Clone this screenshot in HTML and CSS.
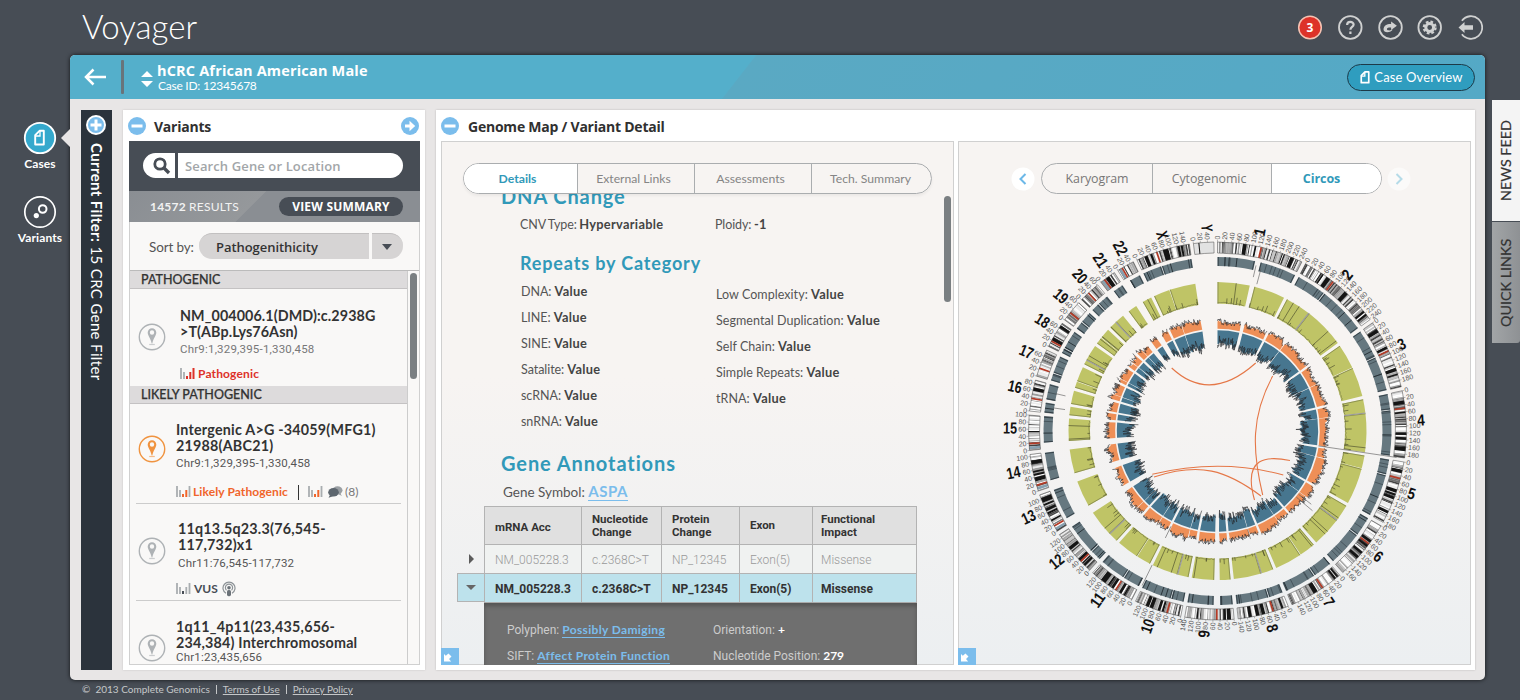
FILE: index.html
```html
<!DOCTYPE html>
<html lang="en">
<head>
<meta charset="utf-8">
<title>Voyager</title>
<link rel="stylesheet" href="styles.css">
</head>
<body>
<svg width="0" height="0" class="defs">
  <defs>
    <symbol id="pin" viewBox="0 0 28 28">
      <circle cx="14" cy="14" r="12.7" fill="none" stroke="currentColor" stroke-width="1.4"/>
      <path d="M14 5.2a4.3 4.3 0 0 0-4.3 4.3c0 3 3 6 4 11h.6c1-5 4-8 4-11A4.3 4.3 0 0 0 14 5.2zm0 2.1a2.2 2.2 0 1 1 0 4.4 2.2 2.2 0 0 1 0-4.4z" fill="currentColor" fill-rule="evenodd"/>
      <path d="M11.2 21.5h5.6" stroke="currentColor" stroke-width="1.2" opacity=".6"/>
    </symbol>
    <symbol id="minus" viewBox="0 0 18 18"><circle cx="9" cy="9" r="9" fill="#7bbdec"/><path d="M3.500 9h11" stroke="#fff" stroke-width="3"/></symbol>
    <symbol id="collapse" viewBox="0 0 18 17"><path d="M0 0h18v17H0z" fill="#7bbdec"/><path d="M3 6l1.800 1.800L7.500 5.500l3 3L8 11l2.200 2.500H3z" fill="#fff"/></symbol>
    <symbol id="page" viewBox="0 0 12 16"><path d="M6 2h4v11.500H2V6z" fill="none" stroke="currentColor" stroke-width="1.8" stroke-linejoin="round"/><path d="M5.800 2v4.500H2" fill="none" stroke="currentColor" stroke-width="1.400"/></symbol>
  </defs>
</svg>

<header class="top">
  <h1 class="brand">Voyager</h1>
  <div class="tools">
    <svg width="26" height="26" viewBox="0 0 26 26"><circle cx="13" cy="13.500" r="11.300" fill="#dd3229" stroke="#f6c3b3" stroke-width="1.500"/><text x="13" y="17.800" class="alert" text-anchor="middle">3</text></svg>
    <svg width="26" height="26" viewBox="0 0 26 26"><g transform="translate(.3 .5)"><circle cx="13" cy="13" r="11.300" class="ring"/><path d="M9.800 10.600c0-4.200 6.500-4 6.500-.5 0 2.400-3.200 2.400-3.200 5.100M13.100 17v2.400" class="ring thick"/></g></svg>
    <svg width="26" height="26" viewBox="0 0 26 26"><g transform="translate(.5 .5)"><circle cx="13" cy="13" r="11.300" class="ring"/><path d="M6 14.800c.2-3.800 3.600-5.600 7.600-5.400V7l5.800 4.300-5.800 4.300v-2.500c-2.700-.1-4.600.3-4.100 1.900.5 1.200 3.600 1.200 5.800.1-1.500 3-9.400 4-9.300-.3z" class="solid"/></g></svg>
    <svg width="26" height="26" viewBox="0 0 26 26"><g transform="translate(-.3 .5)"><circle cx="13" cy="13" r="11.300" class="ring"/><circle cx="13" cy="13" r="3.900" fill="none" stroke="#d0d1d1" stroke-width="3"/><circle cx="13" cy="13" r="5.900" fill="none" stroke="#d0d1d1" stroke-width="2.200" stroke-dasharray="2.700 1.934"/></g></svg>
    <svg width="26" height="26" viewBox="0 0 26 26"><g transform="translate(.5 .5)"><path d="M4.400 6.200a11.300 11.300 0 1 1 0 13.600" class="ring"/><path d="M1 13l6-5.500v3.200h8.500v4.600H7v3.200z" class="solid"/></g></svg>
  </div>
</header>

<main class="stage">
  <nav class="rail">
    <a class="rail-item">
      <svg width="34" height="34" viewBox="0 0 34 34"><circle cx="17" cy="17" r="15.200" fill="#35a9cd" stroke="#fff" stroke-width="1.800"/><path d="M16.500 9.800h4.300v13.700h-8.600v-9.300z" fill="none" stroke="#fff" stroke-width="1.900" stroke-linejoin="round"/><path d="M17 10v5h-4.500" fill="none" stroke="#fff" stroke-width="1.300"/></svg>
      <span>Cases</span>
    </a>
    <a class="rail-item">
      <svg width="34" height="34" viewBox="0 0 34 34"><circle cx="17" cy="17" r="15.200" fill="none" stroke="#fff" stroke-width="1.700"/><circle cx="19.700" cy="14" r="3.800" fill="none" stroke="#fff" stroke-width="2"/><circle cx="13.300" cy="20.600" r="2.600" fill="#fff"/></svg>
      <span>Variants</span>
    </a>
    <i class="pointer"></i>
  </nav>

  <section class="app">
    <div class="casebar">
      <svg class="back" width="24" height="20" viewBox="0 0 24 20"><path d="M9.500 2.500L2 10l7.500 7.500M2 10h20" fill="none" stroke="#fff" stroke-width="2.500"/></svg>
      <i class="rule"></i>
      <svg class="updown" width="12" height="18" viewBox="0 0 12 18"><path d="M0 7l6-6 6 6zM0 11h12l-6 6z" fill="#fff"/></svg>
      <div class="case"><strong>hCRC African American Male</strong><span>Case ID: 12345678</span></div>
      <button class="overview"><svg width="12" height="15" viewBox="0 0 12 16"><use href="#page"/></svg><span>Case Overview</span></button>
    </div>

    <div class="columns">
      <aside class="filter">
        <svg width="20" height="20" viewBox="0 0 20 20"><circle cx="10" cy="10" r="9" fill="#7bbdec" stroke="#fff" stroke-width="2"/><path d="M10 4.500v11M4.500 10h11" stroke="#fff" stroke-width="3"/></svg>
        <p><b>Current Filter:</b> <span>15 CRC Gene Filter</span></p>
      </aside>

      <section class="variants">
        <div class="panel-head">
          <svg width="18" height="18"><use href="#minus"/></svg>
          <h2 class="t-variants">Variants</h2>
          <svg class="go" width="18" height="18" viewBox="0 0 18 18"><circle cx="9" cy="9" r="9" fill="#7bbdec"/><path d="M4 9h5" stroke="#fff" stroke-width="3"/><path d="M8.500 3.800L14.200 9l-5.700 5.200z" fill="#fff"/></svg>
        </div>
        <div class="vbox">
          <div class="search">
            <div class="lens"><svg width="20" height="20" viewBox="0 0 20 20"><circle cx="8" cy="8" r="5.200" fill="none" stroke="#474d55" stroke-width="2.800"/><path d="M11.500 11.500l5.500 5.500" stroke="#474d55" stroke-width="3.400"/></svg></div>
            <div class="field">Search Gene or Location</div>
          </div>
          <div class="results"><span class="count"><b>14572</b> RESULTS</span><span class="summary">VIEW SUMMARY</span></div>
          <div class="sort"><span class="sort-label">Sort by:</span><span class="select">Pathogenithicity</span><span class="drop"><i></i></span></div>
          <div class="scroller">
            <div class="list">
              <h3>PATHOGENIC</h3>
              <article class="v v1">
                <svg class="pin" width="28" height="28"><use href="#pin"/></svg>
                <div>
                  <h4>NM_004006.1(DMD):c.2938G<br>&gt;T(ABp.Lys76Asn)</h4>
                  <p class="loc">Chr9:1,329,395-1,330,458</p>
                  <p class="tag red"><svg width="15" height="12" viewBox="0 0 15 12"><path d="M1 0v11M4 4v7" class="g"/><path d="M7 8v3M10.300 4v7M13.500 0v11" class="c"/></svg><span class="tx-path">Pathogenic</span></p>
                </div>
              </article>
              <h3>LIKELY PATHOGENIC</h3>
              <article class="v v2">
                <svg class="pin orange" width="28" height="28"><use href="#pin"/></svg>
                <div>
                  <h4>Intergenic A&gt;G -34059(MFG1)<br>21988(ABC21)</h4>
                  <p class="loc">Chr9:1,329,395-1,330,458</p>
                  <p class="tag orange"><svg width="15" height="12" viewBox="0 0 15 12"><path d="M1 0v11M4 4v7M13.500 0v11" class="g"/><path d="M7 8v3M10.300 4v7" class="c"/></svg><span class="tx-likely">Likely Pathogenic</span><i class="bar"></i><svg width="15" height="12" viewBox="0 0 15 12"><path d="M1 0v11M4 4v7M13.500 0v11" class="g"/><path d="M7 8v3M10.300 4v7" class="c"/></svg><svg class="chat" width="15" height="12" viewBox="0 0 15 12"><ellipse cx="9.500" cy="4.300" rx="5" ry="4" fill="#9a9fa3"/><path d="M12 7l2 3-4-2z" fill="#9a9fa3"/><ellipse cx="5.500" cy="6.300" rx="5.300" ry="4.300" fill="#5d666e"/><path d="M2 9l-1.500 2.700L5 10.300z" fill="#5d666e"/></svg><span class="eight">(8)</span></p>
                </div>
              </article>
              <article class="v v3">
                <svg class="pin" width="28" height="28"><use href="#pin"/></svg>
                <div>
                  <h4>11q13.5q23.3(76,545-<br>117,732)x1</h4>
                  <p class="loc">Chr11:76,545-117,732</p>
                  <p class="tag dark"><svg width="15" height="12" viewBox="0 0 15 12"><path d="M1 0v11M4 4v7M10.300 4v7M13.500 0v11" class="g"/><path d="M7 8v3" class="c"/></svg><span class="vus">VUS</span><svg class="cast" width="14" height="16" viewBox="0 0 14 16"><path d="M4 12.300a6 6 0 1 1 6 0M4.500 9.300a3.600 3.600 0 1 1 5 0" fill="none" stroke="#8d9397" stroke-width="1.200"/><circle cx="7" cy="6.700" r="1.800" fill="#6b7278"/><rect x="5" y="9" width="4" height="6.200" rx="1.600" fill="#6b7278"/></svg></p>
                </div>
              </article>
              <article class="v v4">
                <svg class="pin" width="28" height="28"><use href="#pin"/></svg>
                <div>
                  <h4>1q11_4p11(23,435,656-<br>234,384) Interchromosomal</h4>
                  <p class="loc">Chr1:23,435,656</p>
                </div>
              </article>
            </div>
            <div class="track"><i></i></div>
          </div>
        </div>
      </section>

      <section class="genome">
        <div class="panel-head">
          <svg width="18" height="18"><use href="#minus"/></svg>
          <h2 class="t-genome">Genome Map / Variant Detail</h2>
        </div>
        <div class="panes">
          <div class="pane">
            <div class="tabs detail-tabs"><span class="on">Details</span><span>External Links</span><span>Assessments</span><span>Tech. Summary</span></div>
            <div class="detail">
              <div class="detail-body">
                <h3 class="big dna">DNA Change</h3>
                <div class="pair cnv"><p>CNV Type: <b>Hypervariable</b></p><p>Ploidy: <b>-1</b></p></div>
                <h3 class="mid">Repeats by Category</h3>
                <div class="pair repeats">
                  <div><p>DNA: <b>Value</b></p><p>LINE: <b>Value</b></p><p>SINE: <b>Value</b></p><p>Satalite: <b>Value</b></p><p>scRNA: <b>Value</b></p><p>snRNA: <b>Value</b></p></div>
                  <div class="second"><p>Low Complexity: <b>Value</b></p><p>Segmental Duplication: <b>Value</b></p><p>Self Chain: <b>Value</b></p><p>Simple Repeats: <b>Value</b></p><p>tRNA: <b>Value</b></p></div>
                </div>
                <h3 class="big gene">Gene Annotations</h3>
                <p class="symbol">Gene Symbol: <a>ASPA</a></p>
                <div class="table">
                  <div class="tr th"><span></span><span>mRNA Acc</span><span>Nucleotide<br>Change</span><span>Protein<br>Change</span><span>Exon</span><span>Functional<br>Impact</span></div>
                  <div class="tr dim"><span><svg width="7" height="10"><path d="M1 0l5 5-5 5z" fill="#5b5b5b"/></svg></span><span>NM_005228.3</span><span>c.2368C&gt;T</span><span>NP_12345</span><span>Exon(5)</span><span>Missense</span></div>
                  <div class="tr sel"><span><svg width="10" height="6"><path d="M0 0h10L5 5z" fill="#666"/></svg></span><span>NM_005228.3</span><span>c.2368C&gt;T</span><span>NP_12345</span><span>Exon(5)</span><span>Missense</span></div>
                  <div class="extra">
                    <p>Polyphen: <a>Possibly Damiging</a></p><p>Orientation: <b>+</b></p>
                    <p>SIFT: <a>Affect Protein Function</a></p><p>Nucleotide Position: <b>279</b></p>
                  </div>
                </div>
              </div>
              <div class="track2"><i></i></div>
            </div>
            <svg class="corner" width="18" height="17"><use href="#collapse"/></svg>
          </div>
          <div class="pane">
            <div class="map-nav">
              <svg width="24" height="24" viewBox="0 0 24 24"><circle cx="12" cy="12" r="11.500" fill="#fff"/><path d="M14.500 7l-5 5 5 5" fill="none" stroke="#6cb8e8" stroke-width="2"/></svg>
              <div class="tabs map-tabs"><span>Karyogram</span><span>Cytogenomic</span><span class="on">Circos</span></div>
              <svg width="24" height="24" viewBox="0 0 24 24"><circle cx="12" cy="12" r="11.500" fill="#fff" opacity=".5"/><path d="M9.500 7l5 5-5 5" fill="none" stroke="#b5dbe8" stroke-width="2"/></svg>
            </div>
            <svg id="circos" class="circos" width="511" height="468" viewBox="959 195 511 468"></svg>
            <svg class="corner" width="18" height="17"><use href="#collapse"/></svg>
          </div>
        </div>
      </section>
    </div>
  </section>

  <aside class="side-tabs"><div class="news">NEWS FEED</div><div class="quick">QUICK LINKS</div></aside>
</main>

<footer class="foot"><span>©&nbsp; 2013 Complete Genomics</span><i></i><a>Terms of Use</a><i></i><a>Privacy Policy</a></footer>
<script src="circos.js"></script>
</body>
</html>
```
FILE: styles.css
```css
* { box-sizing: border-box; }
html, body { margin: 0; height: 700px; overflow: hidden; }
body { background: #474d55; font-family: Lato, sans-serif; color: #333; width: 1520px; }
h1, h2, h3, h4, p { margin: 0; font-weight: inherit; }
svg { display: block; flex: none; }
svg text { font-family: "Liberation Sans", sans-serif; }
.defs { position: absolute; }
.top { height: 55px; display: flex; justify-content: space-between; padding: 0 37px 0 82px; }
.brand { font-weight: 300; font-size: 33px; line-height: 40px; color: #fff; padding-top: 6px; }
.tools { display: flex; gap: 14px; padding-top: 14px; }
.tools .alert { font: bold 12px "Open Sans", sans-serif; fill: #fff; }
.ring { fill: none; stroke: #d0d1d1; stroke-width: 1.8; }
.ring.thick { stroke-width: 2.2; }
.solid { fill: #d0d1d1; }

.stage { display: flex; height: 625px; }
.rail { width: 70px; position: relative; padding-top: 66px; flex: none; }
.rail-item { display: flex; flex-direction: column; align-items: center; width: 80px; height: 74px; color: #fff; font-size: 12px; font-weight: 700; line-height: 16px; gap: 1px; letter-spacing: .1px; }
.pointer { position: absolute; right: 0; top: 74px; border: 9px solid transparent; border-left: 0; border-right-color: #e8e6e6; }

.app { width: 1415px; background: #e8e6e6; box-shadow: 0 0 4px rgba(0,0,0,.75); flex: none; overflow: hidden; border-radius: 5px; }
.casebar { height: 44px; display: flex; align-items: center; color: #fff; background: linear-gradient(128deg, #54afcb 0%, #54afcb 47.300%, #5aa9c3 47.400%, #54a9c6 100%); padding: 0 10px 0 14px; }
.rule { width: 3px; height: 34px; background: #68747b; margin-left: 13px; border-radius: 1px; }
.updown { margin: 3px 0 0 17px; }
.case { margin-left: 4px; display: flex; flex-direction: column; padding-bottom: 1px; }
.case strong { font: 700 14.500px/17px "Open Sans", sans-serif; letter-spacing: .17px; }
.case span { font-size: 12px; line-height: 13px; letter-spacing: -.25px; padding-left: 1px; }
.overview { margin-left: auto; width: 128px; height: 27px; border: 1px solid #1d3a48; border-radius: 14px; background: #2f9dbf; color: #fff; font: 400 13px Lato, sans-serif; display: flex; align-items: center; justify-content: center; gap: 3px; padding: 0; letter-spacing: .15px; }

.columns { display: flex; padding: 11px 10px 10px 11px; gap: 11px; height: 581px; }
.filter { width: 31px; background: #2b333c; display: flex; flex-direction: column; align-items: center; padding: 5px 2px 0 0; color: #fff; }
.filter p { writing-mode: vertical-rl; font-size: 15px; line-height: 20px; margin: 8px 0 0 3px; white-space: nowrap; letter-spacing: .36px; }
.variants { width: 302px; background: #fff; padding: 0 6px 6px 6px; box-shadow: 0 0 2px rgba(0,0,0,.15); }
.genome { width: 1039px; background: #fff; padding: 0 4px 5px 5px; box-shadow: 0 0 2px rgba(0,0,0,.2); }
.panel-head { height: 31px; display: flex; align-items: center; }
.panel-head h2 { font: 700 14px/20px "Open Sans", sans-serif; color: #303030; margin: 3px 0 0 8px; letter-spacing: -.23px; }
.panel-head .t-genome { margin-left: 9px; }
.go { margin-left: auto; }
.variants .panel-head { margin-left: -1px; }

.vbox { width: 291px; height: 524px; display: flex; flex-direction: column; border: 1px solid #d0d0d0; border-top: 0; background: #f9f8f7; }
.search { margin: 0 -1px; height: 50px; background: #474d55; display: flex; gap: 3px; padding: 12px 17px 13px 14px; flex: none; }
.lens { width: 32px; background: #fff; border-radius: 13px 0 0 13px; padding: 3px 0 0 9px; }
.field { flex: 1; background: #fff; border-radius: 0 13px 13px 0; font: 600 13px/27px "Open Sans", sans-serif; color: #a2a6a8; padding-left: 7px; letter-spacing: .12px; white-space: nowrap; }
.results { margin: 0 -1px; height: 31px; background: linear-gradient(135deg, #8a8e93 0%, #95989b 42.500%, #8a8e93 42.800%); display: flex; align-items: center; justify-content: space-between; padding: 0 17px 0 21px; color: #f2f2f2; flex: none; }
.count { font-size: 12px; letter-spacing: .2px; }
.summary { width: 124px; height: 19px; border-radius: 10px; background: #474d55; color: #fff; text-align: center; font: 700 12px/19px "Open Sans", sans-serif; letter-spacing: .2px; }
.sort { height: 48px; display: flex; align-items: flex-start; padding: 11px 15px 0 19px; flex: none; }
.sort-label { width: 50px; font-size: 13.500px; line-height: 28px; color: #555; letter-spacing: -.15px; }
.select { width: 170px; height: 26px; background: #d6d4d4; border-radius: 13px 0 0 13px; border-top: 1px solid #c2c0c0; font: 600 13px/26px "Open Sans", sans-serif; padding-left: 17px; letter-spacing: -.05px; }
.drop { width: 31px; height: 26px; margin-left: 3px; background: #d6d4d4; border-radius: 0 13px 13px 0; border-top: 1px solid #c2c0c0; padding: 10px 0 0 10px; }
.drop i { display: block; width: 0; border: 5px solid transparent; border-top: 6px solid #474d55; border-bottom: 0; }
.scroller { flex: 1; display: flex; border-top: 1px solid #bbb; overflow: hidden; }
.list { width: 278px; border-right: 1px solid #ccc; overflow: hidden; }
.list h3 { height: 18px; background: #dddbdc; border-bottom: 1px solid #c4c2c3; font-size: 12.500px; line-height: 18px; padding-left: 11px; color: #333; font-weight: 500; -webkit-text-stroke: .25px #333; }
.track { padding: 2px 0 0 2px; }
.track i, .track2 i { display: block; width: 7px; height: 106px; background: #7a7f82; border-radius: 4px; }
.v { position: relative; display: flex; margin: 0 6px 0 6px; border-bottom: 1px solid #ccc; }
.pin { color: #aeb2b5; margin: 0 10px 0 2px; }
.pin.orange { color: #f0933f; }
.v h4 { font-weight: 700; font-size: 14.300px; line-height: 16px; color: #333; white-space: nowrap; letter-spacing: .1px; }
.loc { font: 400 11.500px/16px Roboto, sans-serif; color: #555; white-space: nowrap; letter-spacing: .2px; }
.tag { display: flex; align-items: center; height: 16px; font-size: 12px; font-weight: 700; line-height: 16px; }
.tag .g { stroke: #a9adb0; stroke-width: 1.8; }
.tag .c { stroke: currentColor; stroke-width: 2; }
.tag span { margin-left: 3px; }
.red { color: #dd3229; }
.tag.orange { color: #f0652b; }
.dark { color: #474d55; }
.v1 { height: 97px; border: 0; }
.v1 .pin { margin-top: 34px; margin-right: 14px; }
.v1 h4 { margin-top: 19px; } .v1 .loc { margin-top: 1px; color: #777; } .v1 .tag { margin-top: 9px; }
.tx-path { letter-spacing: .15px; }
.v2 { height: 100px; }
.v2 .pin { margin-top: 31px; }
.v2 h4 { margin-top: 18px; letter-spacing: .22px; } .v2 .loc { margin-top: 1px; } .v2 .tag { margin-top: 13px; }
.tx-likely { letter-spacing: .1px; }
.tag .tx-likely { margin-left: 2px; }
.bar { width: 1px; height: 15px; background: #333; margin: 0 9px 0 10px; }
.chat { margin-left: 5px; }
.tag .eight { color: #777; font-weight: 400; margin-left: 2px; }
.v3 { height: 97px; }
.v3 .pin { margin-top: 33px; }
.v3 h4 { margin: 17px 0 0 2px; letter-spacing: .22px; } .v3 .loc { margin: 2px 0 0 2px; } .v3 .tag { margin-top: 10px; }
.cast { margin-left: 4px; }
.v4 { height: 70px; }
.v4 .pin { margin-top: 33px; }
.v4 h4 { margin-top: 18px; letter-spacing: .2px; } .v4 .loc { margin-top: -2px; }

.panes { display: flex; gap: 4px; }
.pane { position: relative; width: 513px; height: 524px; border: 1px solid #d0d0d0; background: linear-gradient(#f7f4f2 45%, #eceff1); }
.corner { position: absolute; left: -1px; bottom: -1px; }
.tabs { display: flex; height: 31px; border: 1px solid #aaadaf; border-radius: 16px; overflow: hidden; }
.tabs span { border-right: 1px solid #aaadaf; text-align: center; font-size: 12.200px; line-height: 30px; color: #858585; }
.tabs span:last-child { border: 0; }
.tabs .on { background: #fff; color: #3199b9; font-weight: 700; }
.detail-tabs { width: 469px; margin: 21px 0 0 21px; position: relative; box-shadow: 0 2px 3px rgba(0,0,0,.05); }
.detail-tabs span { width: 117px; padding-right: 5px; }
.detail-tabs span:last-child { padding-right: 0; }
.detail-tabs .on { width: 114px; padding-right: 6px; }
.map-nav { display: flex; align-items: center; gap: 5px; margin: 21px 0 0 52px; height: 31px; }
.map-tabs { width: 341px; margin-left: 1px; }
.map-tabs span { width: 119px; font: 400 12.400px/30px "Open Sans", sans-serif; color: #777; padding-right: 6px; letter-spacing: -.05px; }
.map-tabs span:first-child { width: 111px; padding-right: 0; }
.map-tabs .on { width: 109px; padding-right: 10px; font-weight: 700; font-size: 12.500px; }
.circos { margin-top: 1px; }

.detail { display: flex; height: 471px; overflow: hidden; }
.detail-body { width: 502px; padding-left: 15px; }
.track2 { padding-top: 2px; }
.big, .mid { color: #3199b9; font-weight: 700; line-height: 24px; white-space: nowrap; }
.big { font-size: 20px; padding-left: 44px; letter-spacing: .9px; }
.mid { font-size: 18px; padding-left: 63px; margin-top: 14px; letter-spacing: .85px; }
.dna { margin-top: -10px; }
.gene { margin-top: 17px; }
.pair { display: grid; grid-template-columns: 195px 1fr; padding-left: 64px; font-size: 12.500px; line-height: 26px; color: #555; letter-spacing: -.1px; }
.pair p { height: 26px; }
.pair b { color: #444; font-size: 12.800px; letter-spacing: .3px; }
.cnv { margin-top: 3px; padding-left: 63px; word-spacing: -.6px; }
.repeats { margin-top: 3px; }
.repeats p { letter-spacing: -.05px; }
.second { padding-top: 3px; }
.second p { letter-spacing: .05px; }
.symbol { padding-left: 46px; margin-top: 4px; line-height: 24px; height: 27px; font-size: 13.500px; color: #555; }
.symbol a { font-size: 15px; font-weight: 700; color: #7bbdec; border-bottom: 1px solid #7bbdec; letter-spacing: .5px; }
.table { width: 460px; font-family: Roboto, sans-serif; font-size: 12px; }
.tr { display: grid; grid-template-columns: 27px 97px 80px 78px 73px 105px; height: 29px; }
.tr span { border: 1px solid #b3b3b3; border-width: 1px 0 0 1px; display: flex; align-items: center; padding: 2px 0 0 10px; }
.tr span:last-child { border-right-width: 1px; padding-left: 8px; }
.tr span:first-child { border-color: transparent; padding-top: 0; }
.th { height: 38px; font-weight: 700; font-size: 11.500px; line-height: 13px; color: #333; }
.th span:not(:first-child) { background: #e0e0e0; padding-top: 0; }
.th span:nth-child(2) { padding-top: 3px; }
.dim { color: #999; font-weight: 300; }
.dim span:not(:first-child) { background: #f0f2f1; }
.sel { color: #333; font-weight: 700; background: #bde2ec; }
.tr.sel span { border-color: #b3b3b3; }
.sel span:first-child { padding-left: 8px; border-bottom-width: 1px; }
.extra { margin-left: 27px; height: 66px; background: #6f6f6f; border-top: 1px solid #aaa; box-shadow: inset 0 3px 4px rgba(0,0,0,.25); padding: 14px 0 0 23px; display: grid; grid-template-columns: 206px 1fr; line-height: 26px; grid-auto-rows: 26px; font-size: 12px; color: #ccc; }
.extra a { color: #7bbdec; font: 700 12px Lato, sans-serif; border-bottom: 1px solid #7bbdec; letter-spacing: .35px; }
.extra b { color: #fff; font-family: Lato, sans-serif; }

.side-tabs { margin-left: 7px; padding-top: 45px; width: 28px; }
.side-tabs div { height: 121px; writing-mode: vertical-rl; transform: rotate(180deg); text-align: center; font-size: 14.300px; line-height: 27px; padding-bottom: 2px; padding-left: 1px; color: #333; white-space: nowrap; -webkit-text-stroke: .2px #333; }
.side-tabs .news { background: #f4f4f4; margin-bottom: 1px; padding: 0 0 0 1px; }
.side-tabs .quick { background: linear-gradient(90deg, #8e9194, #a2a5a7); border-radius: 3px 0 0 0; padding-bottom: 0; }
.foot { display: flex; align-items: center; height: 18px; padding-left: 82px; font-size: 10px; color: #c5c7c9; }
.foot i { width: 1px; height: 9px; background: #c5c7c9; margin: 0 6px; }
.foot a { text-decoration: underline; }

.circos .mb { font-size: 6.900px; fill: #555; }
.circos .chr { font-size: 16px; font-weight: 700; fill: #111; }
.circos .link { fill: none; stroke: #e57747; stroke-width: 1.100; }
```
FILE: circos.js
```js
(function () {
  var CX = 1217.5, CY = 431, K = 0.10737, GAP = 1.24;
  // name, length (Mb), centromere (Mb), first mapped position (Mb), dark bands, label centre
  var chromosomes = [
    ['1', 247, 125, 0, [[72, 83], [106, 111], [186, 189], [192, 195], [212, 223]], [1259.5, 232]],
    ['2', 243, 93, 0, [[50, 53], [56, 60], [70, 82], [136, 148], [212, 218], [222, 228]], [1347, 274.5]],
    ['3', 199, 91, 0, [[22, 32], [77, 85], [143, 153], [160, 164]], [1401.5, 344]],
    ['4', 191, 50, 0, [[28, 38], [59, 64], [118, 126], [132, 140], [160, 172]], [1421, 420]],
    ['5', 181, 48, 0, [[22, 32], [80, 90], [93, 99], [102, 110], [145, 153]], [1411.5, 493.5]],
    ['6', 171, 61, 0, [[49, 57], [66, 72], [90, 98], [106, 115]], [1378.5, 556.5]],
    ['7', 159, 60, 0, [[5, 10], [13, 19], [77, 90]], [1329, 602]],
    ['8', 146, 45, 0, [[14, 20], [68, 78], [85, 95], [107, 116]], [1272.5, 628]],
    ['9', 140, 49, 0, [[9, 20], [23, 30], [103, 107]], [1204, 634]],
    ['10', 135, 40, 0, [[50, 56], [60, 68], [82, 92], [94, 104]], [1147.5, 626]],
    ['11', 134, 53, 0, [[22, 27], [34, 42], [60, 68], [74, 80], [88, 104]], [1097.5, 600]],
    ['12', 132, 35, 0, [[17, 24], [26, 30], [38, 46], [78, 88]], [1056.5, 561.5]],
    ['13', 114, 17, 18, [[32, 37], [54, 60], [64, 72], [80, 86], [90, 104]], [1028.5, 517]],
    ['14', 106, 17, 19, [[28, 40], [44, 50], [54, 58], [78, 88]], [1013.5, 472.5]],
    ['15', 100, 19, 19, [[52, 55], [72, 74]], [1010, 428]],
    ['16', 89, 36, 0, [[58, 68]], [1015, 386.5]],
    ['17', 79, 24, 0, [[58, 60]], [1026.5, 351.5]],
    ['18', 76, 17, 0, [[20, 29], [62, 69]], [1042.5, 320.5]],
    ['19', 63, 26, 0, [], [1061, 296]],
    ['20', 62, 27, 0, [[40, 42]], [1080, 276]],
    ['21', 47, 13, 14, [[17, 29]], [1100.5, 260]],
    ['22', 50, 14, 16, [], [1120.5, 248]],
    ['X', 155, 60, 0, [[22, 32], [40, 46], [78, 94], [120, 127], [130, 136]], [1162.5, 235]],
    ['Y', 58, 12, 99, [[14, 17]], [1207, 228]]
  ];
  var seed = 1234567;
  function rnd() {
    seed = (seed * 1103515245 + 12345) % 2147483648;
    return seed / 2147483648;
  }
  function pt(r, deg) {
    var a = deg * Math.PI / 180;
    return (CX + r * Math.sin(a)).toFixed(2) + ' ' + (CY - r * Math.cos(a)).toFixed(2);
  }
  var out = [];
  function sector(r0, r1, a0, a1, attrs) {
    out.push('<path d="M' + pt(r1, a0) + 'A' + r1 + ' ' + r1 + ' 0 0 1 ' + pt(r1, a1) +
      'L' + pt(r0, a1) + 'A' + r0 + ' ' + r0 + ' 0 0 0 ' + pt(r0, a0) + 'Z" ' + attrs + '/>');
  }
  function ray(r0, r1, a, color, w) {
    out.push('<path d="M' + pt(r0, a) + 'L' + pt(r1, a) + '" stroke="' + color + '" stroke-width="' + w + '"/>');
  }
  function radialText(p, a, str, cls, anchor, extra) {
    var left = a > 180;
    out.push('<text class="' + cls + '" text-anchor="' + (anchor || (left ? 'end' : 'start')) +
      '" dy=".35em" ' + (extra || '') + ' transform="translate(' + p + ') rotate(' + (left ? a + 90 : a - 90) + ')">' + str + '</text>');
  }
  // Density profile: filled area between a base circle and a noisy edge
  function profile(base, dir, low, spread, inset, spike, a0, a1, fill) {
    var edge = [], line = [], a, level = 0.5, r;
    for (a = a0; a <= a1; a += 0.3) {
      level += (rnd() - 0.5) * 0.6;
      level = Math.max(0, Math.min(1, level));
      r = low + spread * level;
      edge.push(pt(base + dir * r, a));
      line.push(pt(base + dir * (r - inset + rnd() * spike), a));
    }
    if (edge.length < 2) { return; }
    out.push('<path d="M' + pt(base, a0) + 'L' + edge.join('L') + 'L' + pt(base, a1) +
      'A' + base + ' ' + base + ' 0 0 0 ' + pt(base, a0) + 'Z" fill="' + fill + '"/>');
    out.push('<path d="M' + line.join('L') + '" fill="none" stroke="#26282b" stroke-width=".6"/>');
  }

  var start = 0;
  chromosomes.forEach(function (c, index) {
    var name = c[0], len = c[1], cen = c[2], end = start + len * K, m, w;
    function at(mb) { return start + mb * K; }

    sector(178, 189, start, end, 'fill="#e2e2e2"');
    var shades = ['#ffffff', '#9b9b9b', '#c4c4c4', '#6d6d6d', '#ececec', '#a8a8a8', '#ffffff', '#444444'];
    if (name !== 'Y') {
      for (m = 0; m < len; m += w) {
        w = 1.5 + rnd() * 4;
        sector(178, 189, at(m), at(Math.min(len, m + w)), 'fill="' + shades[Math.floor(rnd() * 8)] + '"');
      }
    }
    c[4].forEach(function (b) { sector(178, 189, at(b[0]), at(b[1]), 'fill="#151515"'); });
    if (c[3] > 0 && name !== 'Y') { sector(178, 189, at(4), at(11), 'fill="#86a0b0"'); }
    if (name !== 'Y') { sector(178, 189, at(cen - 2.5), at(cen + 2.5), 'fill="#b43a26"'); }
    sector(178, 189, start, end, 'fill="none" stroke="#444" stroke-width=".5"');

    for (m = 0; m <= len; m += 20) {
      ray(189, 191, at(m), '#777', 0.5);
      radialText(pt(191.5, at(m)), at(m), String(m), 'mb');
    }
    var wide = name.length > 1, lx = c[5][0], ly = c[5][1];
    var labelAngle = (Math.atan2(lx - CX, CY - ly) * 180 / Math.PI + 360) % 360;
    radialText(lx + ' ' + ly, labelAngle, name, 'chr', 'middle',
      'textLength="' + (wide ? 14 : 7.5) + '" lengthAdjust="spacingAndGlyphs"');

    if (name !== 'Y') {
      var gapHalf = { '1': 8.5, '9': 10, '16': 5 }[name] || 1;
      var parts = c[3] ? [[c[3], len]] : [[0, cen - gapHalf], [cen + gapHalf, len]];
      parts.forEach(function (p) {
        var a0 = at(p[0]), a1 = at(p[1]), i, n, a, b;
        sector(165, 174, a0, a1, 'fill="#667880"');
        n = 1 + Math.floor((a1 - a0) / 3);
        for (i = 0; i < n; i++) { ray(165, 174, a0 + rnd() * (a1 - a0), '#222b31', rnd() > 0.8 ? 0.9 : 0.45); }
        ray(165, 174, a0 + 0.25, '#2b353b', 0.8);
        ray(165, 174, a1 - 0.3, '#2b353b', 0.8);

        sector(127.5, 149, a0, a1, 'fill="#bfc466"');
        for (i = 0; i < n; i++) {
          a = a0 + rnd() * (a1 - a0);
          ray(127.5, rnd() > 0.85 ? 149 : 130 + rnd() * 5, a, '#3f4226', 0.6);
        }
        ray(127.5, 149, a0 + 0.2, '#6c7040', 0.6);
        b = '';
        for (a = a0; a < a1; a += 0.7) { b += (b ? 'L' : 'M') + pt(127.7 + rnd() * 1.2, a); }
        out.push('<path d="' + b + '" fill="none" stroke="#5c6038" stroke-width=".5"/>');

        profile(102.3, 1, 5.5, 4.5, 2, 5, a0, a1, '#ee8f57');
        profile(100.7, -1, 12.5, 6, 7, 11, a0, a1, '#47768f');
      });
      if (!c[3] && gapHalf === 1 && index % 2) { ray(127.5, 149, at(cen), '#999', 1.2); }
    }
    start = end + GAP;
  });

  [[98.4, 102, 181], [206, 149, 172], [283, 156, 166], [278, 154, 166], [13.1, 158, 170], [15, 152, 168], [128, 103, 119], [130, 103, 124], [206, 106, 119], [163, 103, 113]].forEach(function (s) {
    ray(s[1], s[2], s[0], '#555', 0.6);
  });
  [
    'M1171.700 368Q1210 404 1255.700 363',
    'M1272.700 376C1251 416 1252 450 1262.700 495',
    'M1290 460.500C1268 456 1242 456 1254.500 500',
    'M1152.300 474.300Q1220 458 1283.300 475',
    'M1154 477C1200 462 1226 470 1261 496'
  ].forEach(function (d) { out.push('<path class="link" d="' + d + '"/>'); });
  document.getElementById('circos').innerHTML = out.join('');
})();
```
